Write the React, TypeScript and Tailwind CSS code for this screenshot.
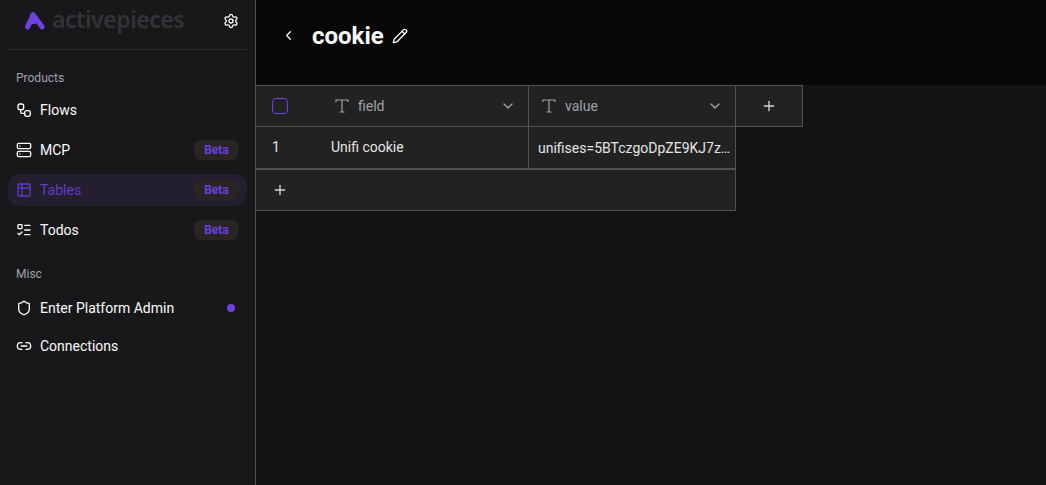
import { ChevronDown, ChevronLeft, Link2, ListTodo, Pencil, Plus, Server, Settings, Shield, Table2 } from "lucide-react";
import type { ReactNode } from "react";

function Logo() {
  return (
    <svg width="22" height="20" viewBox="0 0 22 20" className="shrink-0">
      <path d="M9 3.8 L18 15.8 M3.6 15.8 L8.6 5.5 M7 10.5 L9.6 10.5" fill="none" stroke="#6e41e2" strokeWidth="5.2" strokeLinecap="round" strokeLinejoin="round" />
    </svg>
  );
}

function FlowIcon() {
  return (
    <svg width="16" height="16" viewBox="0 0 24 24" fill="none" stroke="currentColor" strokeWidth="2" strokeLinecap="round" strokeLinejoin="round">
      <rect x="3" y="3" width="8.5" height="8.5" rx="3" />
      <rect x="13" y="13" width="8.5" height="8.5" rx="3" />
      <path d="M7 11.5v3.5a2 2 0 0 0 2 2h4" />
    </svg>
  );
}

function NavItem({ icon, label, beta, active, dot }: { icon: ReactNode; label: string; beta?: boolean; active?: boolean; dot?: boolean }) {
  return (
    <div className={`flex h-8 items-center rounded-xl pl-2 pr-2 ${active ? "bg-[#231f2f] text-[#5f3bc4]" : "text-[#fafafa]"}`}>
      <span className="flex w-4 shrink-0 items-center justify-center">{icon}</span>
      <span className="ml-2 flex-1 text-sm leading-5">{label}</span>
      {beta && <span className="flex h-5 w-[45px] items-center justify-center rounded-lg bg-[#292524] text-xs font-semibold text-[#6e41e2]">Beta</span>}
      {dot && <span className="mr-[4px] h-2 w-2 rounded-full bg-[#6e41e2]" />}
    </div>
  );
}

function TypeIcon() {
  return (
    <svg width="14" height="14" viewBox="0 0 14 14" fill="none" stroke="#a1a1aa" strokeWidth="1.2" className="shrink-0">
      <path d="M1 3V1H13V3M7 1V13M4.5 13H9.5" />
    </svg>
  );
}

function HeaderCell({ label, className }: { label: string; className: string }) {
  return (
    <div className={`flex items-center border-r border-[#525252] text-sm text-[#a1a1aa] ${className}`}>
      <TypeIcon />
      <span className="ml-[9px] flex-1">{label}</span>
      <ChevronDown size={16} color="#a1a1aa" />
    </div>
  );
}

export default function App() {
  return (
    <div className="flex h-[485px] w-[1046px] overflow-hidden bg-[#121212] font-['Roboto',sans-serif]">
      <aside className="flex w-[256px] shrink-0 flex-col border-r border-[#525252] bg-[#18181b] px-2">
        <div className="flex h-[50px] items-center border-b border-[#2d2d30] pb-[8px] pl-4 pr-[8px]">
          <Logo />
          <span className="ml-[6px] flex-1 -translate-y-px font-['Noto_Sans',sans-serif] text-[23px] leading-none font-semibold tracking-[-0.45px] text-[#333336]">activepieces</span>
          <Settings size={16} color="#fafafa" />
        </div>
        <div className="mt-[20px] px-2 text-xs leading-4 text-[#a1a1aa]">Products</div>
        <div className="mt-2 flex flex-col gap-2">
          <NavItem icon={<FlowIcon />} label="Flows" />
          <NavItem icon={<Server size={16} />} label="MCP" beta />
          <NavItem icon={<Table2 size={16} />} label="Tables" beta active />
          <NavItem icon={<ListTodo size={16} />} label="Todos" beta />
        </div>
        <div className="mt-[20px] px-2 text-xs leading-4 text-[#a1a1aa]">Misc</div>
        <div className="mt-[10px] flex flex-col gap-[6px]">
          <NavItem icon={<Shield size={16} />} label="Enter Platform Admin" dot />
          <NavItem icon={<Link2 size={16} />} label="Connections" />
        </div>
      </aside>
      <main className="flex min-w-0 flex-1 flex-col">
        <header className="flex h-[85px] shrink-0 items-center bg-[#080808] pb-[14px] pl-[25px]">
          <ChevronLeft size={15} color="#fafafa" />
          <h1 className="ml-[16px] text-2xl font-bold text-[#fafafa]">cookie</h1>
          <Pencil size={16} color="#fafafa" className="ml-[8px]" />
        </header>
        <div className="flex w-[547px] flex-col">
          <div className="flex h-[42px] border-y border-[#525252] bg-[#222222]">
            <div className="flex w-[73px] items-center pl-[16px]">
              <span className="h-4 w-4 rounded-[4px] border border-[#6e41e2]" />
            </div>
            <HeaderCell label="field" className="w-[200px] pl-[6px] pr-[12px]" />
            <HeaderCell label="value" className="w-[207px] pl-[13px] pr-[12px]" />
            <div className="flex flex-1 items-center justify-center border-r border-[#525252]">
              <Plus size={16} color="#d4d4d8" />
            </div>
          </div>
          <div className="flex h-[43px] w-[480px] border-r border-b-2 border-[#525252] bg-[#222222] text-sm text-[#e5e5e5]">
            <div className="flex w-[75px] items-center pb-[2px] pl-[16px]">1</div>
            <div className="flex w-[198px] items-center border-r border-[#525252] pb-[2px]">Unifi cookie</div>
            <div className="flex min-w-0 flex-1 items-center pl-[9px]">
              <span className="whitespace-nowrap">unifises=5BTczgoDpZE9KJ7z…</span>
            </div>
          </div>
          <div className="flex h-[41px] w-[480px] items-center border-r border-b border-[#525252] bg-[#222222] pl-[16px]">
            <Plus size={16} color="#d4d4d8" />
          </div>
        </div>
      </main>
    </div>
  );
}
